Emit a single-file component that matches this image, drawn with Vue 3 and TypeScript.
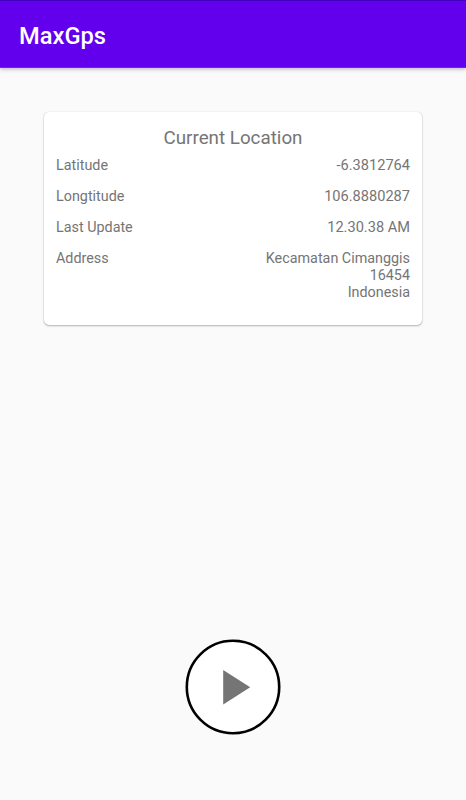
<script setup lang="ts">
interface Row {
  label: string
  lines: string[]
  numeric?: boolean
}

const rows: Row[] = [
  { label: 'Latitude', lines: ['-6.3812764'], numeric: true },
  { label: 'Longtitude', lines: ['106.8880287'], numeric: true },
  { label: 'Last Update', lines: ['12.30.38 AM'], numeric: true },
  { label: 'Address', lines: ['Kecamatan Cimanggis', '16454', 'Indonesia'] },
]
</script>

<template>
  <div class="screen">
    <header class="bar"><h1 class="title">MaxGps</h1></header>
    <main class="content">
      <section class="card">
        <h2 class="heading">Current Location</h2>
        <dl class="rows">
          <div v-for="row in rows" :key="row.label" class="row">
            <dt>{{ row.label }}</dt>
            <dd :class="{ numeric: row.numeric }">
              <div v-for="line in row.lines" :key="line">{{ line }}</div>
            </dd>
          </div>
        </dl>
      </section>
      <button class="play" type="button" aria-label="Start">
        <svg width="96" height="96" viewBox="0 0 96 96">
          <circle cx="48" cy="48" r="46.2" fill="#fff" stroke="#000" stroke-width="2.6" />
          <path d="M38.2 31v34.4L65.2 48.2z" fill="#757575" />
        </svg>
      </button>
    </main>
  </div>
</template>

<style>
body {
  background: #fafafa;
}
</style>

<style scoped>
.screen {
  display: flex;
  flex-direction: column;
  height: 800px;
  background: #fafafa;
  color: #757575;
  font-family: Roboto, "Liberation Sans", sans-serif;
}
.bar {
  display: flex;
  align-items: center;
  box-sizing: border-box;
  height: 68px;
  padding: 4px 19px 0;
  border-top: 1px solid #3f00bd;
  border-bottom: 1px solid #6a2ad8;
  background: #6200ee;
  box-shadow: 0 1px 4px rgba(60, 20, 110, 0.35);
}
.title {
  margin: 0;
  color: #fff;
  font-size: 23.7px;
  line-height: 28px;
  font-weight: 500;
}
.content {
  flex: 1;
  display: flex;
  flex-direction: column;
  justify-content: space-between;
  align-items: center;
  padding: 44px 44px 65px;
}
.card {
  box-sizing: border-box;
  width: 378px;
  height: 213px;
  padding: 14px 12px;
  border-radius: 5px;
  background: #fff;
  box-shadow: 0 1px 2px rgba(0, 0, 0, 0.28), 0 0 1px rgba(0, 0, 0, 0.2);
}
.heading {
  margin: 0 0 7px;
  text-align: center;
  font-size: 18.8px;
  line-height: 24px;
  font-weight: 400;
}
.rows {
  display: flex;
  flex-direction: column;
  gap: 14px;
  margin: 0;
  font-size: 14.35px;
  line-height: 17px;
}
.row {
  display: flex;
  justify-content: space-between;
}
dd {
  margin: 0;
  text-align: right;
}
.numeric {
  font-size: 14.6px;
}
.play {
  display: block;
  padding: 0;
  border: 0;
  background: none;
}
.play svg {
  display: block;
}
</style>
